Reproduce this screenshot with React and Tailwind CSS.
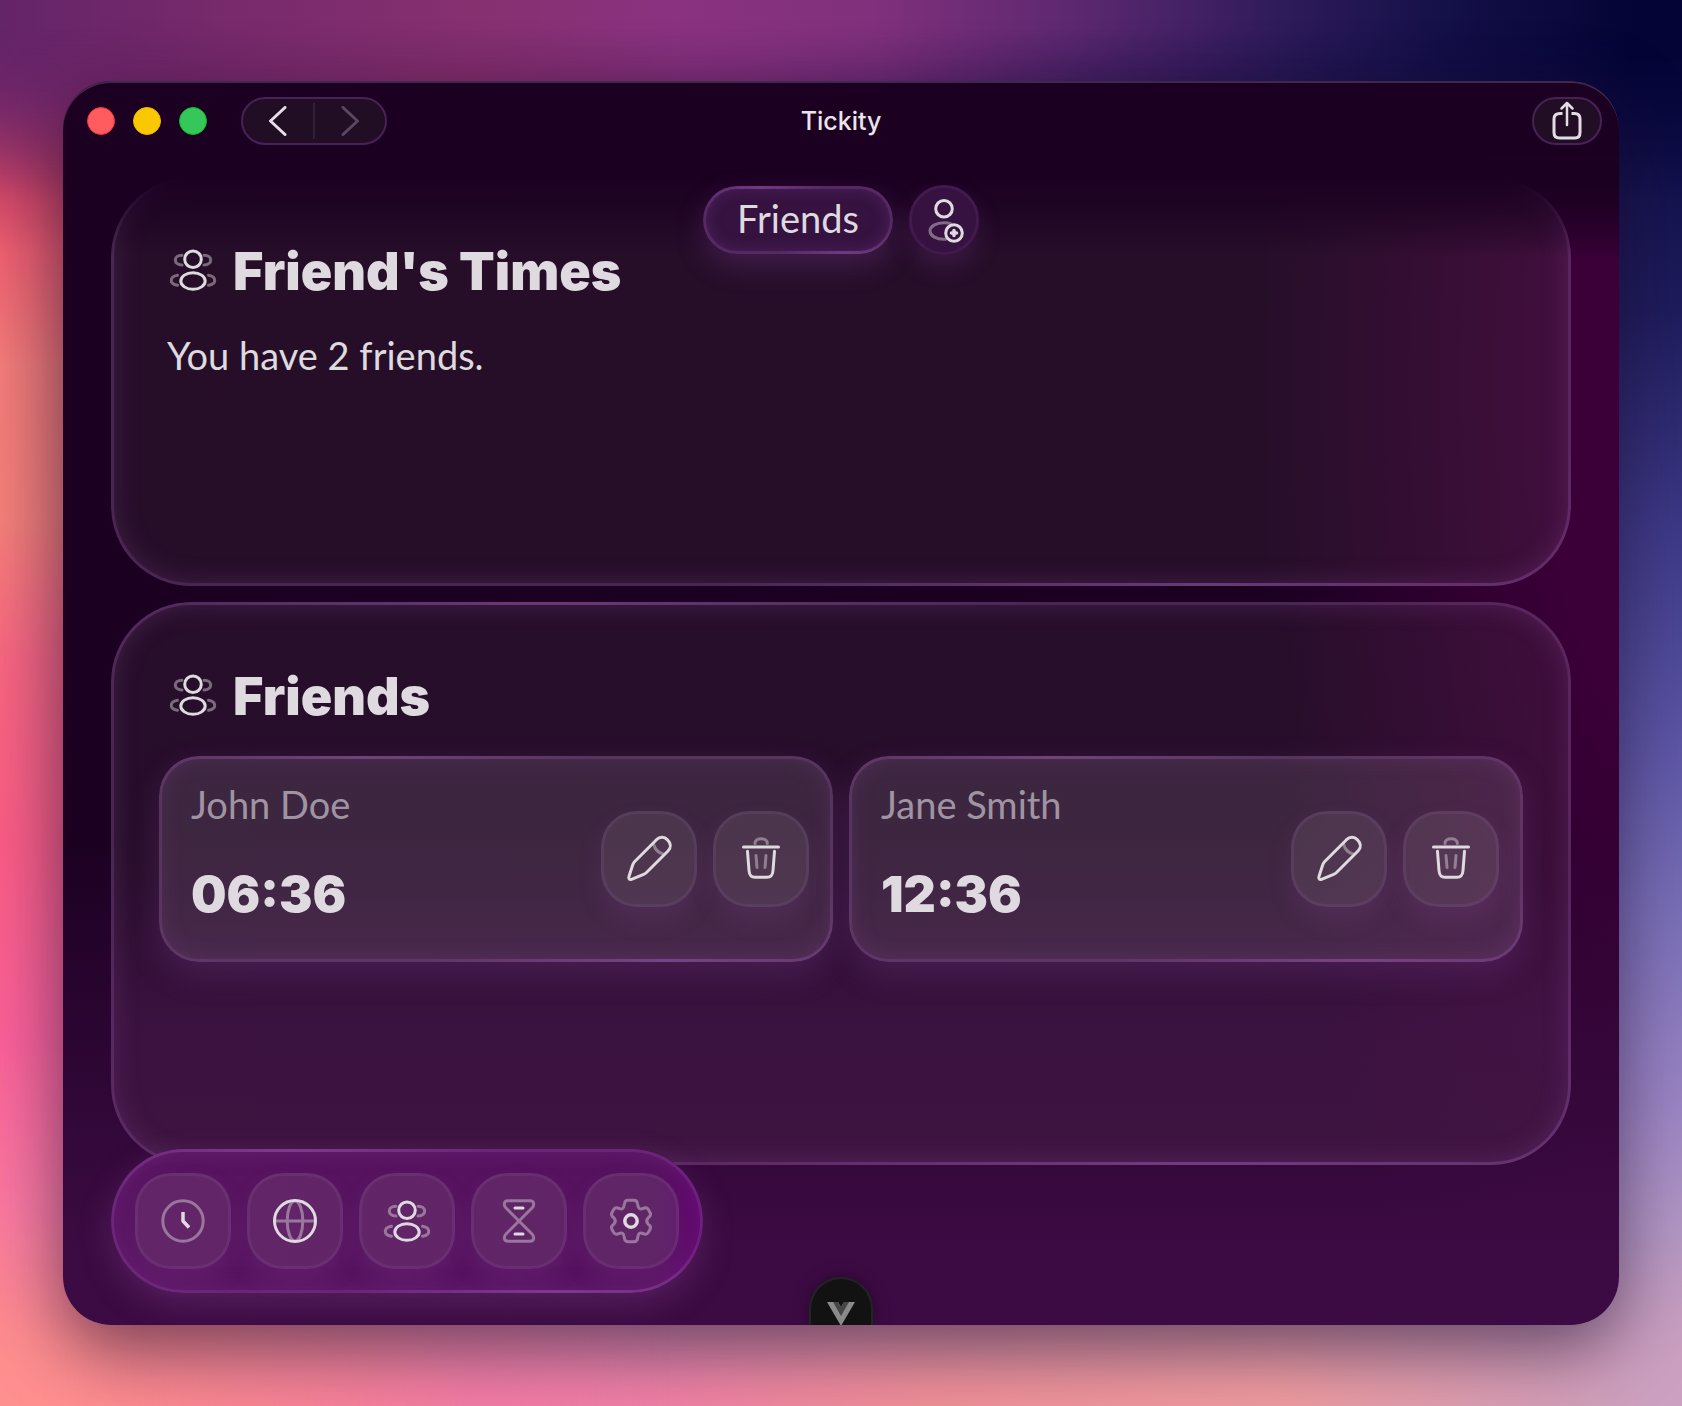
import React from "react";

const SANS = "font-['Lato','Open_Sans',sans-serif]";
const BLACK = "font-['Inter','Liberation_Sans',sans-serif] font-black";

function Icon({ children }) {
  return (
    <svg
      viewBox="0 0 48 48"
      className="size-12 shrink-0"
      fill="none"
      stroke="currentColor"
      strokeWidth="3"
      strokeLinecap="round"
      strokeLinejoin="round"
      aria-hidden="true"
    >
      {children}
    </svg>
  );
}

const PeopleIcon = () => (
  <Icon>
    <circle cx="24" cy="13.2" r="8.3" />
    <ellipse cx="24" cy="35" rx="12.2" ry="8.3" />
    <g opacity=".45">
      <path d="M13 9.3C8.5 9.3 6.3 11.5 6.3 14S8.5 18.9 13 18.9" />
      <path d="M35 9.3C39.5 9.3 41.7 11.5 41.7 14S39.5 18.9 35 18.9" />
      <path d="M8.5 29.3C4.5 30 2.3 32 2.3 34.4S4.5 38.5 8.5 39.2" />
      <path d="M39.5 29.3C43.5 30 45.7 32 45.7 34.4S43.5 38.5 39.5 39.2" />
    </g>
  </Icon>
);

const AddPersonIcon = () => (
  <Icon>
    <circle cx="24" cy="12.7" r="8.3" />
    <path opacity=".45" d="M31 27.8C29 27 26.5 26.7 24 26.7C16 26.7 10 30.4 10 35S16 43.3 24 43.3H25.5" />
    <circle cx="34" cy="37" r="8.3" />
    <path strokeWidth="3.5" d="M34 34.5V39.5M31.5 37H36.5" />
  </Icon>
);

const PencilIcon = () => (
  <Icon>
    <path d="M31.5 4.7C35 1.3 39.5 1.8 42.5 4.9C46 8.3 46.3 12.5 43 16L21.5 37.5C20.5 38.5 19.5 39 18 39.7L6.5 44.3C4.5 45 3.2 43.7 3.9 41.7L7.5 30.5C8 29 8.5 27.8 9.5 26.8Z" />
    <path opacity=".45" d="M28.7 9.5C30 14.5 33 17.5 38 19" />
  </Icon>
);

const TrashIcon = () => (
  <Icon>
    <path opacity=".45" d="M18 8.5C18 2 30.3 2 30.3 8.5M19 20.5L20 32.5M29 20.5L28 32.5" />
    <path d="M6.5 12H41.5M10.5 16.3L12 35.5C12.4 40.5 14 42.3 18 42.3H30C34 42.3 35.6 40.5 36 35.5L37.5 16.3" />
  </Icon>
);

const ClockIcon = () => (
  <Icon>
    <circle cx="24" cy="24" r="20.2" opacity=".45" />
    <path strokeWidth="3.5" strokeLinecap="butt" d="M24 15V24L30 30.5" />
  </Icon>
);

const GlobeIcon = () => (
  <Icon>
    <g opacity=".45">
      <ellipse cx="24" cy="24" rx="7.8" ry="20" />
      <path d="M4 24H44" />
    </g>
    <circle cx="24" cy="24" r="20.5" />
  </Icon>
);

const HourglassIcon = () => (
  <Icon>
    <path
      opacity=".45"
      d="M13 3.7H35C39.5 3.7 39.5 8.5 37 11L11 37C8.5 39.5 8.5 44.3 13 44.3H35C39.5 44.3 39.5 39.5 37 37L11 11C8.5 8.5 8.5 3.7 13 3.7Z"
    />
    <path d="M20 11H28M20 37H28" />
  </Icon>
);

const GearIcon = () => (
  <Icon>
    <path
      opacity=".45"
      d="M21 3.3H27Q30 3.3 30.5 6.5L31 9Q31.6 12.5 35 11.8L37.5 11Q40 10.3 41.3 12.5L43 15.5Q44.3 17.8 42.5 19.6L41 21Q38.4 24 41 27L42.5 28.4Q44.3 30.2 43 32.5L41.3 35.5Q40 37.7 37.5 37L35 36.2Q31.6 35.5 31 39L30.5 41.5Q30 44.7 27 44.7H21Q18 44.7 17.5 41.5L17 39Q16.4 35.5 13 36.2L10.5 37Q8 37.7 6.7 35.5L5 32.5Q3.7 30.2 5.5 28.4L7 27Q9.6 24 7 21L5.5 19.6Q3.7 17.8 5 15.5L6.7 12.5Q8 10.3 10.5 11L13 11.8Q16.4 12.5 17 9L17.5 6.5Q18 3.3 21 3.3Z"
    />
    <circle cx="24" cy="24" r="6.2" strokeWidth="3.5" />
  </Icon>
);

/* Gradient hairline drawn just inside the rounded edge of a glass surface. */
function Rim() {
  return (
    <span
      aria-hidden="true"
      className="pointer-events-none absolute inset-0 rounded-[inherit] bg-[radial-gradient(ellipse_35%_50%_at_30%_0%,rgba(165,90,185,0.36),transparent),radial-gradient(ellipse_35%_50%_at_75%_100%,rgba(165,90,185,0.36),transparent),linear-gradient(rgba(150,90,170,0.22),rgba(150,90,170,0.22))] p-[3px] [mask:linear-gradient(#000_0_0)_content-box_exclude,linear-gradient(#000_0_0)]"
    />
  );
}

function Panel({ title, className, children }) {
  return (
    <section
      className={`relative rounded-[80px] p-12 shadow-[inset_0_0_28px_rgba(150,85,165,0.3)] ${className}`}
    >
      <Rim />
      <h2 className={`${BLACK} relative z-10 flex h-[90px] items-center gap-4 px-[10px] text-[52px] leading-none`}>
        <PeopleIcon />
        <span className="pt-1">{title}</span>
      </h2>
      {children}
    </section>
  );
}

function TileButton({ label, children }) {
  return (
    <button
      type="button"
      aria-label={label}
      className="flex size-24 items-center justify-center rounded-[36px] border-3 border-[rgba(150,100,175,0.16)] bg-[rgba(190,190,185,0.11)] shadow-[0_12px_24px_rgba(150,80,170,0.16)]"
    >
      {children}
    </button>
  );
}

function FriendCard({ name, time }) {
  return (
    <article className="relative flex min-h-[206px] items-center justify-between rounded-[40px] bg-[rgba(200,185,195,0.14)] pr-6 pl-8 shadow-[inset_0_0_24px_rgba(160,95,175,0.2),0_12px_32px_rgba(140,70,165,0.24)]">
      <Rim />
      <div className="flex flex-col gap-[34px] pb-3">
        <h3 className={`${SANS} text-[38px] leading-[48px] text-[#a094a3]`}>{name}</h3>
        <time className={`${BLACK} text-[50px] leading-[64px]`}>{time}</time>
      </div>
      <div className="flex gap-4">
        <TileButton label={`Edit ${name}`}>
          <PencilIcon />
        </TileButton>
        <TileButton label={`Delete ${name}`}>
          <TrashIcon />
        </TileButton>
      </div>
    </article>
  );
}

function TitleBar() {
  return (
    <header className="grid h-20 grid-cols-[1fr_auto_1fr] items-center px-[17px]">
      <div className="flex items-center pl-[7px]">
        <div className="flex gap-[18px]">
          <button type="button" aria-label="Close" className="size-7 rounded-full border border-[#f0303c] bg-[#ff5c60]" />
          <button type="button" aria-label="Minimize" className="size-7 rounded-full border border-[#f0b800] bg-[#fac800]" />
          <button type="button" aria-label="Zoom" className="size-7 rounded-full border border-[#12b52a] bg-[#35c75a]" />
        </div>
        <div className="ml-[34px] flex h-12 items-center rounded-full border-2 border-[#4a2058] bg-[#210e24]">
          <button type="button" aria-label="Back" className="flex h-full w-[70px] items-center justify-center">
            <svg viewBox="0 0 20 30" className="h-[30px] w-5" fill="none" stroke="#e6dfe7" strokeWidth="3" strokeLinecap="round" strokeLinejoin="round">
              <path d="M17 1.5L2.5 15L17 28.5" />
            </svg>
          </button>
          <span className="h-9 w-[2px] bg-[#33203a]" />
          <button type="button" aria-label="Forward" disabled className="flex h-full w-[70px] items-center justify-center">
            <svg viewBox="0 0 20 30" className="h-[30px] w-5" fill="none" stroke="#5c4662" strokeWidth="3" strokeLinecap="round" strokeLinejoin="round">
              <path d="M3 1.5L17.5 15L3 28.5" />
            </svg>
          </button>
        </div>
      </div>
      <h1 className="font-['Inter',sans-serif] text-[25px] leading-8 font-medium text-[#eae4eb]">Tickity</h1>
      <button
        type="button"
        aria-label="Share"
        className="flex h-12 w-[70px] items-center justify-center justify-self-end rounded-full border-2 border-[#4a2058] bg-[#210e24]"
      >
        <svg viewBox="0 0 32 40" className="h-10 w-8" fill="none" stroke="#e3dce4" strokeWidth="3" strokeLinecap="round" strokeLinejoin="round">
          <path strokeLinecap="butt" d="M11.5 12.5H9C5 12.5 3 14.5 3 18V31.5C3 35.5 5 37 8.5 37H24C27.5 37 29 35.5 29 31.5V18C29 14.5 27.5 12.5 23.5 12.5H20.5" />
          <path strokeWidth="2.5" d="M16 24V2M10.5 7.5L16 2L21.5 7.5" />
        </svg>
      </button>
    </header>
  );
}

function Dock() {
  const items = [
    ["Clock", ClockIcon],
    ["World", GlobeIcon],
    ["Friends", PeopleIcon],
    ["Timer", HourglassIcon],
    ["Settings", GearIcon],
  ];
  return (
    <nav className="absolute bottom-8 left-12 z-20 flex gap-4 rounded-[72px] bg-[linear-gradient(90deg,#57145f_0%,#55125e_92%,#5c0868_98%)] p-6 shadow-[inset_0_0_24px_rgba(150,60,175,0.32),0_12px_32px_rgba(140,80,150,0.3)]">
      <Rim />
      {items.map(([label, Glyph]) => (
        <TileButton key={label} label={label}>
          <Glyph />
        </TileButton>
      ))}
    </nav>
  );
}

export default function App() {
  return (
    <div className="grid min-h-screen overflow-hidden bg-[#c06080]">
      <div
        aria-hidden="true"
        className="col-start-1 row-start-1 bg-[linear-gradient(180deg,#050436_0%,#0e0d46_8%,#1e1c5c_22%,#3e3a88_38%,#5a54a4_52%,#7a70b8_65%,#9a84c4_78%,#b498c4_88%,#cca0c0_100%)]"
      />
      <div
        aria-hidden="true"
        className="col-start-1 row-start-1 bg-[linear-gradient(90deg,#ff8a8c_0%,#f27590_8%,#f075b0_28%,#f080a8_38%,#f09098_55%,#f09ca0_76%,#cca0c0_98%)] [mask-image:linear-gradient(180deg,transparent_88%,#000_99%)]"
      />
      <div
        aria-hidden="true"
        className="col-start-1 row-start-1 bg-[linear-gradient(180deg,#632468_0%,#802a6c_6%,#a83868_10%,#d04868_14%,#ee6070_18%,#f47c78_26%,#f57f78_37%,#f96580_47%,#fb5c84_60%,#fb6098_74%,#fb78a0_86%,#fe8c8e_95%,#ff9090_100%)] [mask-image:linear-gradient(90deg,#000_0%,transparent_40%)]"
      />
      <div
        aria-hidden="true"
        className="col-start-1 row-start-1 bg-[linear-gradient(90deg,#642468_0%,#782a6c_14%,#863070_28%,#8a3280_40%,#80307c_52%,#5c2870_64%,#2c1a58_77%,#141048_86%,#050436_97%)] [mask-image:linear-gradient(180deg,#000_0%,#000_2%,transparent_14%)]"
      />
      <div
        aria-hidden="true"
        className="col-start-1 row-start-1 bg-[radial-gradient(ellipse_24%_9%_at_24%_7%,rgba(165,45,90,0.75),transparent),radial-gradient(ellipse_20%_8%_at_45%_3%,rgba(145,50,135,0.7),transparent)]"
      />

      <div className="z-10 col-start-1 row-start-1 flex flex-col px-[63px] py-[81px]">
        <div className="relative flex flex-1 flex-col overflow-hidden rounded-[48px] bg-[linear-gradient(180deg,#1b0021_70px,transparent_180px),linear-gradient(180deg,transparent_60%,rgba(61,11,68,0.97)_94%),radial-gradient(ellipse_26%_95%_at_103%_24%,#3a0037_30%,transparent),linear-gradient(#1b0021,#1b0021)] text-[#dedadf] shadow-[0_24px_70px_rgba(30,10,40,0.58),inset_0_2px_0_#40284a]">
          <TitleBar />

          <main className="flex flex-1 flex-col gap-4 px-12 pt-4 pb-40">
            <Panel title="Friend's Times" className="min-h-[409px] bg-[rgba(100,85,90,0.16)]">
              <p className={`${SANS} mt-4 px-2 text-[38px] leading-[48px]`}>You have 2 friends.</p>
            </Panel>
            <Panel
              title="Friends"
              className="min-h-[563px] bg-[linear-gradient(180deg,rgba(100,85,90,0.16)_50%,rgba(110,60,110,0.24)_75%,rgba(110,80,90,0.16))]"
            >
              <div className="mt-4 grid grid-cols-2 gap-4">
                <FriendCard name="John Doe" time="06:36" />
                <FriendCard name="Jane Smith" time="12:36" />
              </div>
            </Panel>
          </main>

          <div
            aria-hidden="true"
            className="pointer-events-none absolute inset-x-0 top-20 h-24 bg-[linear-gradient(180deg,#1b0021_18%,rgba(27,0,33,0.75)_40%,transparent)]"
          />

          <div className="absolute inset-x-0 top-[104px] z-20 flex items-center justify-center gap-4">
            <div className={`${SANS} relative flex h-[68px] items-center rounded-full bg-[#351240] px-[34px] pb-1 text-[38px] leading-none shadow-[inset_0_0_18px_rgba(150,80,170,0.35),0_12px_28px_rgba(140,70,165,0.26)]`}>
              <Rim />
              Friends
            </div>
            <button
              type="button"
              aria-label="Add friend"
              className="flex size-[70px] items-center justify-center rounded-full border-3 border-[#431a4d] bg-[#35123f] shadow-[0_12px_24px_rgba(140,70,165,0.2)]"
            >
              <AddPersonIcon />
            </button>
          </div>

          <Dock />

          <div className="pointer-events-none absolute inset-x-0 bottom-0 z-20 flex justify-center">
            <button
              type="button"
              aria-label="Vue developer tools"
              className="pointer-events-auto flex h-12 w-16 items-start justify-center rounded-t-[32px] border-2 border-b-0 border-[#242424] bg-[#121212] pt-[23px] shadow-[0_0_16px_rgba(0,0,0,0.35)]"
            >
              <svg viewBox="0 0 28 24" className="h-6 w-7">
                <path fill="#8a8a8a" d="M0 0H11L14 5L17 0H28L14 24Z" />
                <path fill="#464646" d="M6 0H11L14 5L17 0H22L14 14Z" />
              </svg>
            </button>
          </div>
        </div>
      </div>
    </div>
  );
}
